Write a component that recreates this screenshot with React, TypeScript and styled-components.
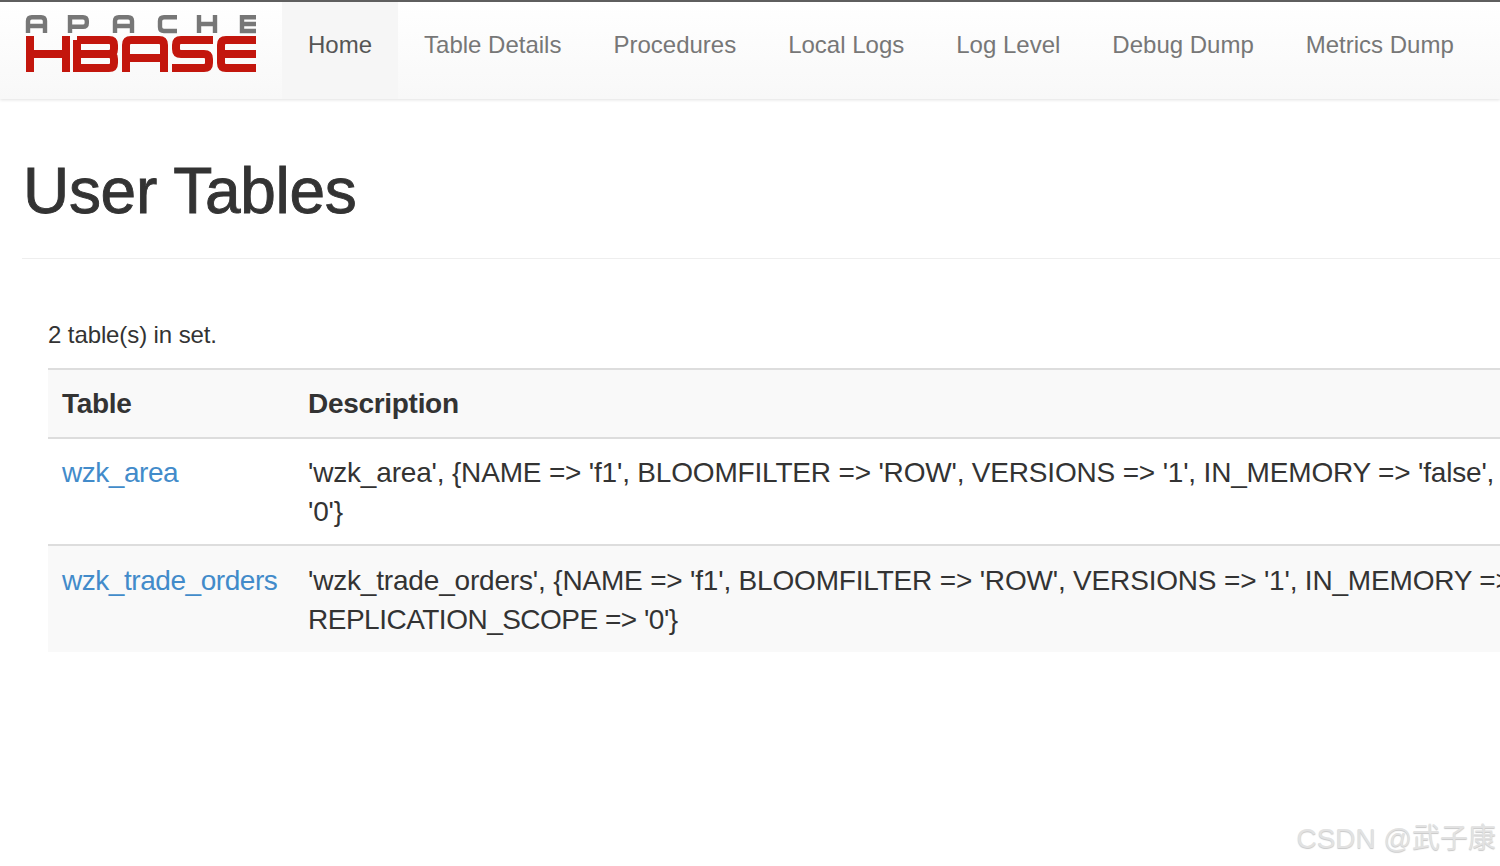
import styled, { createGlobalStyle } from "styled-components";

const GlobalStyle = createGlobalStyle`
  html, body {
    margin: 0;
    padding: 0;
    background: #fff;
    overflow: hidden;
  }
  body {
    font-family: "Liberation Sans", Arial, sans-serif;
    color: #333;
  }
`;

const Page = styled.div`
  width: 1500px;
  height: 866px;
  position: relative;
  overflow: hidden;
`;

const NavBar = styled.nav`
  height: 97px;
  display: flex;
  border-top: 2px solid #5f5f5f;
  background: linear-gradient(to bottom, #fff 0%, #f8f8f8 100%);
  box-shadow: 0 1px 3px rgba(0, 0, 0, 0.12);
`;

const Brand = styled.a`
  width: 282px;
  flex: none;
  display: flex;
  padding: 11px 0 0 25px;
  box-sizing: border-box;
`;

const LogoSvg = styled.svg`
  filter: blur(0.5px);
`;

const NavList = styled.ul`
  display: flex;
  list-style: none;
  margin: 0;
  padding: 0;
`;

const NavItem = styled.li<{ $active?: boolean }>`
  padding: 27px 26px 0;
  font-size: 24px;
  line-height: 32px;
  color: ${(p) => (p.$active ? "#555" : "#777")};
  background: ${(p) => (p.$active ? "#f6f6f6" : "transparent")};
`;

const Content = styled.main`
  padding: 0 0 0 22px;
`;

const PageHeader = styled.div`
  margin-top: 57px;
  height: 102px;
  border-bottom: 1px solid #eee;
`;

const Title = styled.h1`
  margin: 0 0 0 1px;
  font-size: 64px;
  line-height: 70px;
  font-weight: 400;
  color: #333;
  letter-spacing: -0.3px;
  -webkit-text-stroke: 0.9px #333;
`;

const Body = styled.section`
  padding: 60px 0 0 26px;
`;

const Count = styled.p`
  margin: 0 0 17px;
  font-size: 24px;
  line-height: 32px;
  letter-spacing: -0.1px;
`;

const Table = styled.table`
  width: 1500px;
  border-collapse: collapse;
  table-layout: fixed;
  font-size: 28px;
  line-height: 39px;
  letter-spacing: -0.18px;
`;

const HeadRow = styled.tr`
  background: #f9f9f9;
`;

const HeadCell = styled.th<{ $w?: number }>`
  width: ${(p) => (p.$w ? `${p.$w}px` : "auto")};
  box-sizing: border-box;
  text-align: left;
  font-weight: 700;
  padding: 14px;
  border-top: 2px solid #ddd;
  border-bottom: 2px solid #ddd;
  letter-spacing: -0.3px;
`;

const Row = styled.tr<{ $striped?: boolean }>`
  background: ${(p) => (p.$striped ? "#f9f9f9" : "#fff")};
`;

const Cell = styled.td`
  padding: 14px;
  vertical-align: top;
  white-space: nowrap;
  overflow: hidden;
`;

const BorderedCell = styled(Cell)`
  padding-bottom: 13px;
  border-bottom: 2px solid #ddd;
`;

const LastCell = styled(Cell)`
  padding-top: 15px;
  padding-bottom: 13px;
`;

const TableLink = styled.a`
  color: #428bca;
  text-decoration: none;
  letter-spacing: -0.45px;
`;

const Line = styled.div<{ $tight?: boolean }>`
  letter-spacing: ${(p) => (p.$tight ? "-0.5px" : "inherit")};
`;

const Watermark = styled.div`
  position: absolute;
  right: 4px;
  bottom: 9px;
  font-family: "Liberation Sans", "Noto Sans CJK SC", sans-serif;
  font-size: 28px;
  line-height: 36px;
  color: #e2e2e2;
  text-shadow: 0 1px 1px #c8c8c8;
`;

const HbaseLogo = () => (
  <LogoSvg width="232" height="62" viewBox="0 0 232 62" role="img" aria-label="Apache HBase">
    <g fill="none" stroke="#777" strokeWidth="4.4">
      <path d="M3 20V8q0-3.800 3.800-3.800h9.400q3.800 0 3.800 3.800v12M3 13h17" />
      <path d="M45 20V4.200h13q3.800 0 3.800 3.800v2q0 3.800-3.800 3.800H45" />
      <path d="M90 20V8q0-3.800 3.800-3.800h9.400q3.800 0 3.800 3.800v12M90 13h17" />
      <path d="M152 4.200h-13q-4 0-4 3.800v6q0 4 4 4h13" />
      <path d="M174 2v18M190 2v18M174 11h16" />
      <path d="M231 4.200h-14v13.800h14M217 11h14" />
    </g>
    <g fill="none" stroke="#c3160d" strokeWidth="8">
      <path d="M5 23v36M41 23v36M5 41h36" />
      <path d="M52 27h32q5 0 5 5v4q0 5-5 5q5 0 5 5v4q0 5-5 5H52V27M52 41h32" />
      <path d="M101 59V32q0-5 5-5h28q5 0 5 5v27M101 45h38" />
      <path d="M188 27h-32q-5 0-5 5v4q0 5 5 5h23q5 0 5 5v4q0 5-5 5h-32" />
      <path d="M231 27h-30q-5 0-5 5v18q0 5 5 5h30M196 41h35" />
    </g>
  </LogoSvg>
);

const navItems = ["Table Details", "Procedures", "Local Logs", "Log Level", "Debug Dump", "Metrics Dump"];

export default function App() {
  return (
    <Page>
      <GlobalStyle />
      <NavBar>
        <Brand>
          <HbaseLogo />
        </Brand>
        <NavList>
          <NavItem $active>Home</NavItem>
          {navItems.map((n) => (
            <NavItem key={n}>{n}</NavItem>
          ))}
        </NavList>
      </NavBar>
      <Content>
        <PageHeader>
          <Title>User Tables</Title>
        </PageHeader>
        <Body>
          <Count>2 table(s) in set.</Count>
          <Table>
            <thead>
              <HeadRow>
                <HeadCell $w={246}>Table</HeadCell>
                <HeadCell>Description</HeadCell>
              </HeadRow>
            </thead>
            <tbody>
              <Row>
                <BorderedCell>
                  <TableLink>wzk_area</TableLink>
                </BorderedCell>
                <BorderedCell>
                  <Line>
                    'wzk_area', {"{"}NAME =&gt; 'f1', BLOOMFILTER =&gt; 'ROW', VERSIONS =&gt; '1', IN_MEMORY =&gt; 'false',
                  </Line>
                  <Line>'0'{"}"}</Line>
                </BorderedCell>
              </Row>
              <Row $striped>
                <LastCell>
                  <TableLink>wzk_trade_orders</TableLink>
                </LastCell>
                <LastCell>
                  <Line>
                    'wzk_trade_orders', {"{"}NAME =&gt; 'f1', BLOOMFILTER =&gt; 'ROW', VERSIONS =&gt; '1', IN_MEMORY =&gt;
                  </Line>
                  <Line $tight>REPLICATION_SCOPE =&gt; '0'{"}"}</Line>
                </LastCell>
              </Row>
            </tbody>
          </Table>
        </Body>
      </Content>
      <Watermark>CSDN @武子康</Watermark>
    </Page>
  );
}
